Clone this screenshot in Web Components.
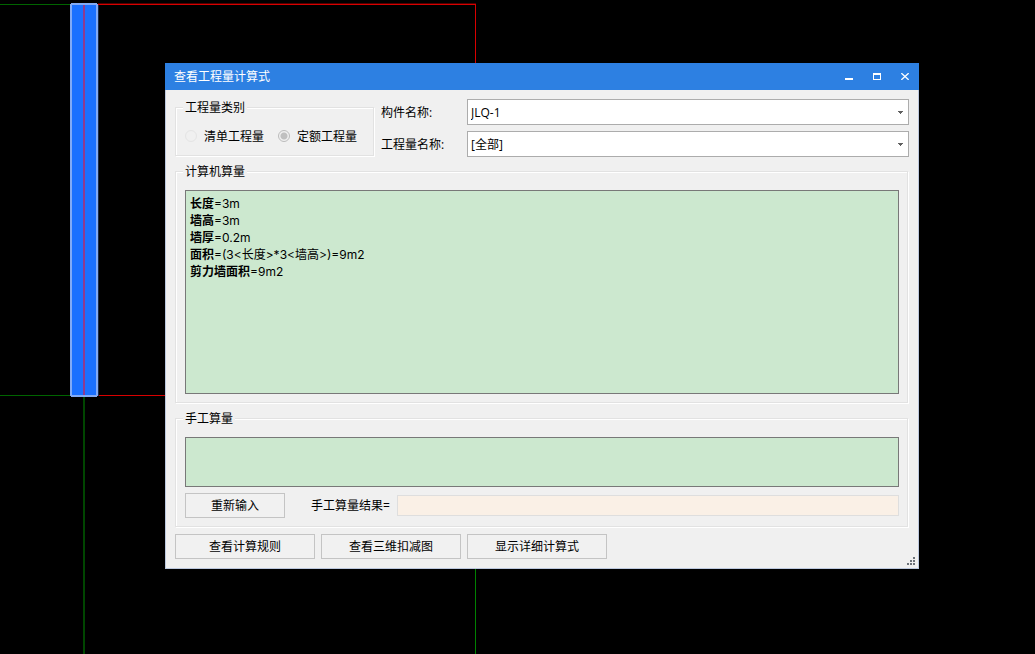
<!DOCTYPE html>
<html lang="zh-CN">
<head>
<meta charset="utf-8">
<title>查看工程量计算式</title>
<style>
  body { margin: 0; background: #000; font: 12px/17px "Open Sans", "Noto Sans CJK SC", sans-serif; color: #000; }
</style>
</head>
<body>
<app-workspace></app-workspace>
<script>
const define = (name, html, setup) => customElements.define(name, class extends HTMLElement {
  constructor() {
    super();
    this.attachShadow({ mode: 'open' }).innerHTML = html;
  }
  connectedCallback() { if (setup) setup(this, this.shadowRoot); }
});

/* Drawing area: axis grid with the selected wall */
define('cad-view', `
<style>
  :host { display: block; }
  svg { display: block; width: 100%; height: 100%; }
</style>
<svg shape-rendering="crispEdges" aria-hidden="true">
  <path d="M0 4.5H70M0 395.5H70" stroke="#006400" fill="none"/>
  <path d="M98 3.5H476" stroke="#500000" fill="none"/>
  <path d="M98 4.5H475.5V395.5H98" stroke="#d80000" fill="none"/>
  <rect x="83" y="397" width="2" height="2000" fill="#004600"/>
  <rect x="475" y="396" width="1" height="2000" fill="#008000"/>
  <rect x="98" y="5" width="1" height="391" fill="#182848"/>
  <path d="M71 3H97V4H98V396H97V397H71V396H70V4H71Z" fill="#82aaf5"/>
  <rect x="72" y="5" width="24" height="390" fill="#1a70ff"/>
  <rect x="83" y="5" width="2" height="390" fill="#8f3b8e"/>
</svg>`);

define('title-bar', `
<style>
  :host { display: flex; align-items: center; height: 27px; padding-left: 9px; background: #2d80e2; color: #fff; }
  h1 { flex: 1; margin: 0; font: inherit; }
  button { width: 28px; height: 27px; padding: 0; border: 0; background: none; color: inherit; display: grid; place-items: center; }
  svg { display: block; }
</style>
<h1><slot></slot></h1>
<button aria-label="最小化"><svg width="8" height="7"><path d="M0 5h8v2H0z" fill="#fff"/></svg></button>
<button aria-label="最大化"><svg width="8" height="7"><path d="M0 0h8v7H0zM1 2v4h6V2z" fill="#fff" fill-rule="evenodd"/></svg></button>
<button aria-label="关闭"><svg width="8" height="7" viewBox="0 0 8 7"><path d="M.3 .2L7.7 6.8M7.7 .2L.3 6.8" stroke="#fff" stroke-width="1.4"/></svg></button>`);

define('group-box', `
<style>
  :host { display: block; }
  fieldset { margin: 0 1px 1px 0; padding: 10px 8px 8px 9px; min-width: 0; border: 1px solid #e2e2e2;
             box-shadow: 1px 1px #fff, inset 1px 1px #fff; }
  legend { height: 17px; margin-left: -2px; padding: 0 2px; background: #f0f0f0; }
</style>
<fieldset><legend></legend><slot></slot></fieldset>`,
(el, root) => { root.querySelector('legend').textContent = el.getAttribute('caption'); });

define('category-choice', `
<style>
  :host { display: flex; align-items: center; gap: 14px; height: 21px; white-space: nowrap; }
  label { display: flex; align-items: flex-start; gap: 7px; }
  input { appearance: none; box-sizing: border-box; width: 12px; height: 12px; margin: 2px 0 0;
          border: 1px solid #e4e4e4; border-radius: 50%; }
  input:checked { border-color: #bcbcbc; background: radial-gradient(circle, #c0c0c0 3px, transparent 4px); }
</style>
<label><input type="radio" name="category" disabled>清单工程量</label>
<label><input type="radio" name="category" disabled checked>定额工程量</label>`);

define('combo-field', `
<style>
  :host { display: flex; align-items: center; }
  label { flex: none; width: 86px; }
  select { flex: 1; min-width: 0; height: 26px; box-sizing: border-box; padding: 0 16px 0 3px; appearance: none;
           border: 1px solid #acacac; border-radius: 0; font: inherit; color: inherit;
           background: #fff url("data:image/svg+xml,%3Csvg xmlns='http://www.w3.org/2000/svg' width='5' height='3' shape-rendering='crispEdges'%3E%3Cpath d='M0 0h5v1H4v1H3v1H2V2H1V1H0z' fill='%23606060'/%3E%3C/svg%3E") no-repeat right 5px center; }
</style>
<label for="s"></label><select id="s"><option></option></select>`,
(el, root) => {
  root.querySelector('label').textContent = el.getAttribute('label');
  root.querySelector('option').textContent = el.getAttribute('value');
});

define('push-button', `
<style>
  :host { display: block; flex: none; width: 140px; }
  button { display: block; width: 100%; height: 25px; padding: 0; box-sizing: border-box; border: 1px solid #c4c4c4;
           border-radius: 0; background: #f1f1f1; font: inherit; color: inherit; }
</style>
<button type="button"><slot></slot></button>`);

define('formula-view', `
<style>
  :host { display: block; box-sizing: border-box; min-height: 204px; padding: 4px; border: 1px solid #787878;
          background: #cce8cf; font-family: Inter, "Noto Sans CJK SC", sans-serif; }
  p { margin: 0; }
</style>
<p><b>长度</b>=3m</p>
<p><b>墙高</b>=3m</p>
<p><b>墙厚</b>=0.2m</p>
<p><b>面积</b>=(3&lt;长度&gt;*3&lt;墙高&gt;)=9m2</p>
<p><b>剪力墙面积</b>=9m2</p>`);

define('manual-entry', `
<style>
  :host { display: flex; flex-direction: column; gap: 6px; }
  textarea { display: block; box-sizing: border-box; width: 100%; height: 50px; margin: 0; padding: 4px; resize: none;
             border: 1px solid #787878; border-radius: 0; background: #cce8cf; font: inherit; color: inherit; }
  div { display: flex; align-items: center; gap: 6px; }
  push-button { width: 100px; }
  label { flex: none; width: 80px; margin-left: 20px; white-space: nowrap; }
  input { flex: 1; min-width: 0; height: 21px; box-sizing: border-box; padding: 0 4px; border: 1px solid #dedede;
          background: #faf0e6; font: inherit; color: inherit; }
</style>
<textarea aria-label="手工算量"></textarea>
<div>
  <push-button>重新输入</push-button>
  <label for="r">手工算量结果=</label><input id="r" type="text" readonly>
</div>`);

define('calc-dialog', `
<style>
  :host { display: block; background: #f0f0f0; }
  main { position: relative; display: flex; flex-direction: column; gap: 6px; padding: 9px;
         border: 1px solid #bcc8de; border-top: 0; }
  .top { display: flex; gap: 6px; }
  .top group-box { flex: none; width: 200px; }
  .fields { flex: 1; min-width: 0; display: flex; flex-direction: column; gap: 6px; }
  .actions { display: flex; gap: 6px; }
  .grip { position: absolute; right: 3px; bottom: 3px; display: block; }
</style>
<title-bar>查看工程量计算式</title-bar>
<main>
  <div class="top">
    <group-box caption="工程量类别"><category-choice></category-choice></group-box>
    <div class="fields">
      <combo-field label="构件名称:" value="JLQ-1"></combo-field>
      <combo-field label="工程量名称:" value="[全部]"></combo-field>
    </div>
  </div>
  <group-box caption="计算机算量"><formula-view></formula-view></group-box>
  <group-box caption="手工算量"><manual-entry></manual-entry></group-box>
  <div class="actions">
    <push-button>查看计算规则</push-button>
    <push-button>查看三维扣减图</push-button>
    <push-button>显示详细计算式</push-button>
  </div>
  <svg class="grip" width="8" height="8" aria-hidden="true"><path d="M6 0h2v2H6zM3 3h2v2H3zM6 3h2v2H6zM0 6h2v2H0zM3 6h2v2H3zM6 6h2v2H6z" fill="#6e737a"/></svg>
</main>`);

define('app-workspace', `
<style>
  :host { display: block; position: relative; height: 100vh; overflow: hidden; background: #000; }
  cad-view { height: 100%; }
  calc-dialog { position: absolute; top: 63px; left: 165px; right: 116px; }
</style>
<cad-view></cad-view>
<calc-dialog></calc-dialog>`);
</script>
</body>
</html>
